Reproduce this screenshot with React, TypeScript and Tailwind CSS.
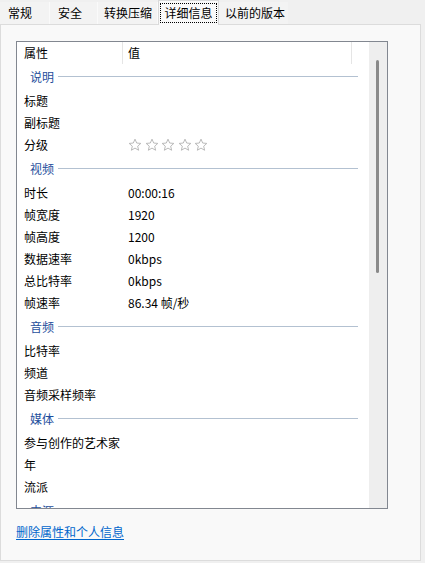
import React from "react";

type Row =
  | { kind: "group"; label: string }
  | { kind: "item"; label: string; value?: string; stars?: boolean };

const rows: Row[] = [
  { kind: "group", label: "说明" },
  { kind: "item", label: "标题" },
  { kind: "item", label: "副标题" },
  { kind: "item", label: "分级", stars: true },
  { kind: "group", label: "视频" },
  { kind: "item", label: "时长", value: "00:00:16" },
  { kind: "item", label: "帧宽度", value: "1920" },
  { kind: "item", label: "帧高度", value: "1200" },
  { kind: "item", label: "数据速率", value: "0kbps" },
  { kind: "item", label: "总比特率", value: "0kbps" },
  { kind: "item", label: "帧速率", value: "86.34 帧/秒" },
  { kind: "group", label: "音频" },
  { kind: "item", label: "比特率" },
  { kind: "item", label: "频道" },
  { kind: "item", label: "音频采样频率" },
  { kind: "group", label: "媒体" },
  { kind: "item", label: "参与创作的艺术家" },
  { kind: "item", label: "年" },
  { kind: "item", label: "流派" },
  { kind: "group", label: "来源" },
];

function Star() {
  return (
    <svg width="14" height="14" viewBox="0 0 24 24" className="block">
      <polygon
        points="12,2 14.9,8.6 22,9.3 16.6,14 18.2,21 12,17.3 5.8,21 7.4,14 2,9.3 9.1,8.6"
        fill="none"
        stroke="#b5b5b5"
        strokeWidth="1.6"
        strokeLinejoin="round"
      />
    </svg>
  );
}

function Tab({ label, w }: { label: string; w: string }) {
  return (
    <div className={`${w} h-[22px] bg-[#f3f3f3] border-r border-[#fafafa] flex items-center pl-[8px] leading-[16px] whitespace-nowrap`}>
      {label}
    </div>
  );
}

export default function App() {
  return (
    <div className="w-[425px] h-[563px] bg-[#f0f0f0] text-[12px] text-black font-['Microsoft_YaHei','Noto_Sans_CJK_SC',sans-serif] overflow-hidden">
      <div className="flex items-end h-[24px]">
        <Tab label="常规" w="w-[50px]" />
        <Tab label="安全" w="w-[48px]" />
        <div className="w-[60px] h-[22px] bg-[#f3f3f3] border-r border-[#fafafa] flex items-center pl-[6px] leading-[16px] whitespace-nowrap">转换压缩</div>
        <div className="w-[61px] h-[25px] bg-[#f9f9f9] border-x border-t border-[#d9d9d9] relative z-10 -mb-px flex items-center justify-center pb-[1px]">
          <span className="w-[57px] h-[20px] border border-dotted border-black flex items-center justify-center leading-[16px] whitespace-nowrap">
            详细信息
          </span>
        </div>
        <div className="w-[69px] h-[22px] bg-[#f3f3f3] flex items-center pl-[6px] leading-[16px] whitespace-nowrap">以前的版本</div>
      </div>
      <div className="w-[421px] h-[537px] bg-[#f9f9f9] border border-[#dcdcdc] pl-[15px] pt-[16px]">
        <div className="w-[372px] h-[468px] bg-white border border-[#828790] flex">
          <div className="w-[352px] h-full overflow-hidden">
            <div className="flex h-[22px] leading-[16px]">
              <div className="w-[106px] border-r border-[#e5e5e5] pl-[7px] flex items-center">属性</div>
              <div className="w-[229px] border-r border-[#e5e5e5] pl-[5px] flex items-center">值</div>
            </div>
            {rows.map((r, i) =>
              r.kind === "group" ? (
                <div key={i} className="h-[26px] flex items-center pl-[13px] pb-[1px]">
                  <span className="text-[#1e4e9c] leading-[16px] whitespace-nowrap">{r.label}</span>
                  <div className="ml-[4px] w-[300px] h-px bg-[#b3c1d1]" />
                </div>
              ) : (
                <div key={i} className="h-[22px] flex items-center leading-[16px]">
                  <div className="w-[111px] pl-[7px] whitespace-nowrap">{r.label}</div>
                  <div className="flex items-center whitespace-nowrap">
                    {r.stars ? (
                      <div className="flex gap-[2.5px]">
                        <Star />
                        <Star />
                        <Star />
                        <Star />
                        <Star />
                      </div>
                    ) : (
                      r.value
                    )}
                  </div>
                </div>
              )
            )}
          </div>
          <div className="w-[18px] h-full bg-[#eeeeee] pt-[18px] pl-[7px]">
            <div className="w-[3px] h-[213px] rounded-full bg-[#8a8a8a]" />
          </div>
        </div>
        <div className="mt-[15px] leading-[16px]">
          <span className="text-[#0066cc] underline underline-offset-2">删除属性和个人信息</span>
        </div>
      </div>
    </div>
  );
}
